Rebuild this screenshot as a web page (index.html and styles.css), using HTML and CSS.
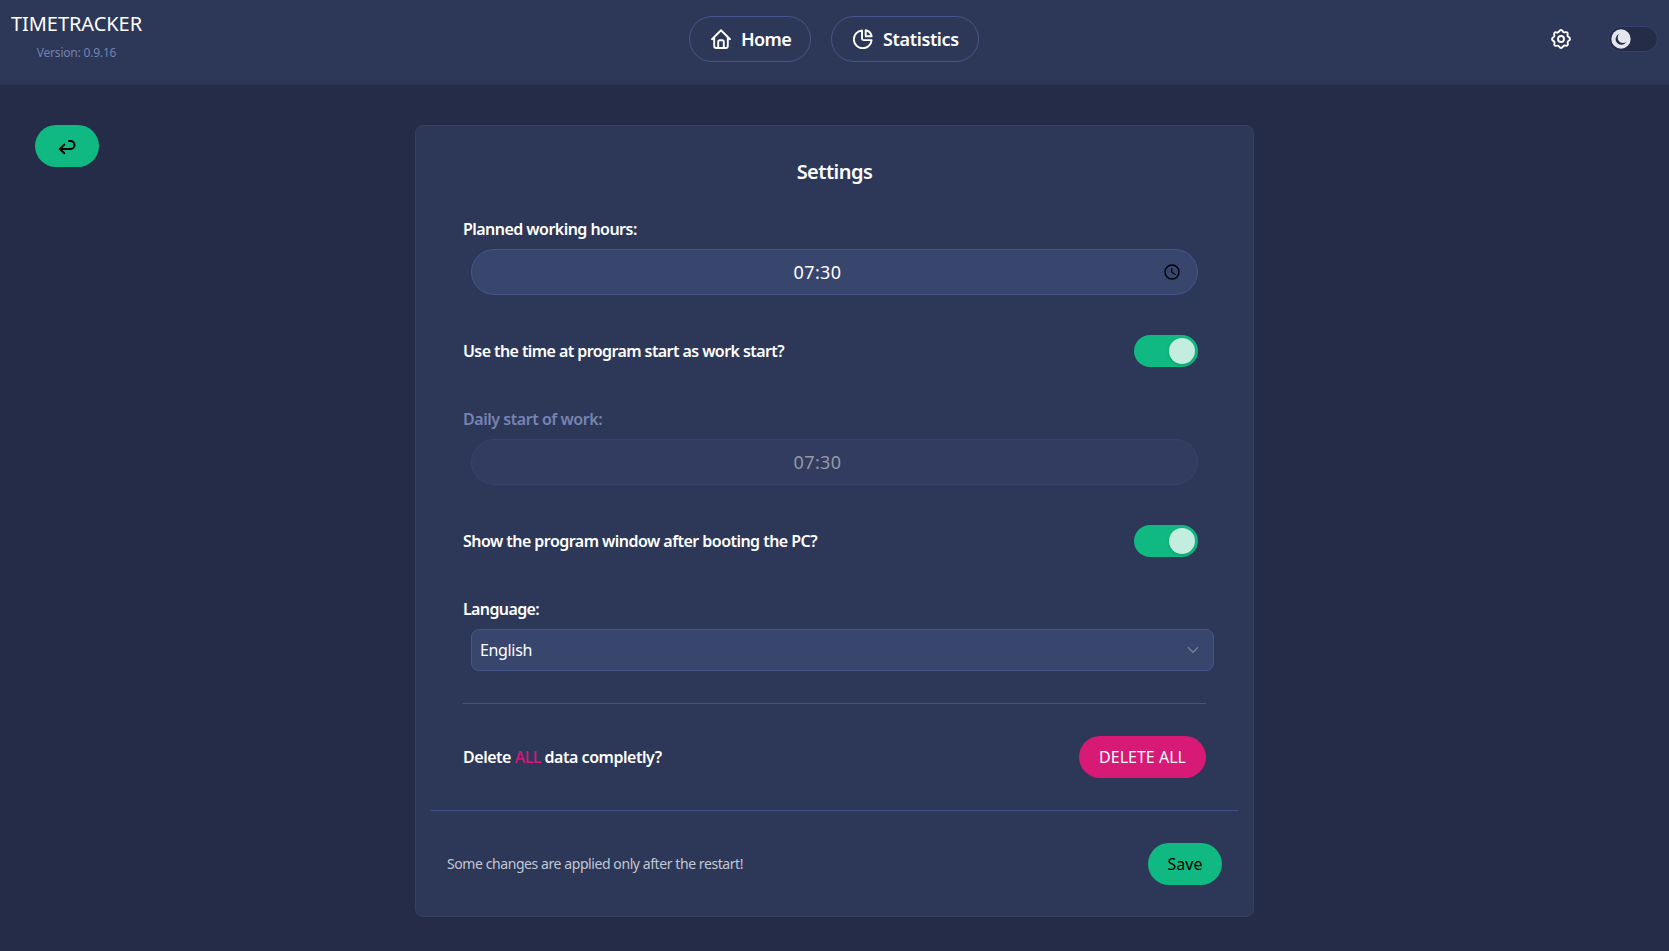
FILE: index.html
```html
<!DOCTYPE html>
<html lang="en">
<head>
<meta charset="utf-8">
<title>Timetracker</title>
<link rel="stylesheet" href="styles.css">
</head>
<body>
<header class="topbar">
  <div class="brand">
    <div class="brand-name">TIMETRACKER</div>
    <div class="brand-version">Version: 0.9.16</div>
  </div>
  <nav class="nav">
    <a class="nav-link nav-home">
      <svg class="icon" viewBox="0 0 20 20"><path d="M1 10.2 10 1.3l9 8.900M3.200 8.600V16.900Q3.200 19 5.300 19H14.700Q16.800 19 16.800 16.900V8.600M7.200 19V13Q7.200 11.300 8.900 11.300H11.100Q12.800 11.300 12.800 13V19"/></svg>
      <span>Home</span>
    </a>
    <a class="nav-link nav-stats">
      <svg class="icon" viewBox="0 0 20 20"><path d="M9 1.500A8.900 8.900 0 1 0 18.600 11.100H10.500Q9 11.100 9 9.600ZM12.700 1.200a7.600 7.600 0 0 1 6 6h-6Z"/></svg>
      <span>Statistics</span>
    </a>
  </nav>
  <div class="tools">
    <svg class="icon gear" viewBox="0 0 20 20"><circle cx="10" cy="10" r="3"/><path d="M10 1C11.800 1 11.600 3.300 13 3.400S15.300 2.400 16.400 3.600 15.900 5.700 16.600 7 19 8.200 19 10 16.700 11.600 16.600 13 17.600 15.300 16.400 16.400 14.300 15.900 13 16.600 11.800 19 10 19 8.400 16.700 7 16.600 4.700 17.600 3.600 16.400 4.100 14.300 3.400 13 1 11.800 1 10 3.300 8.400 3.400 7 2.400 4.700 3.600 3.600 5.700 4.100 7 3.400 8.200 1 10 1Z"/></svg>
    <div class="theme-switch">
      <svg class="moon" viewBox="0 0 20 20"><circle cx="10" cy="10" r="9.700" fill="#e3e6ed"/><path d="M8.500 4.700A5.700 5.700 0 1 0 15.400 12.700 5.200 5.200 0 0 1 8.500 4.700Z" fill="#252c47"/></svg>
    </div>
  </div>
</header>
<main class="page">
  <button class="btn back" aria-label="Back">
    <svg class="return" viewBox="0 0 18 16"><path d="M11 2h1.500a3.900 3.900 0 0 1 0 8H2M6.300 5.600 1.800 10l4.500 4.300"/></svg>
  </button>
  <section class="card">
    <h1 class="title"><span>Settings</span></h1>
    <div class="form">
      <div class="field">
        <div class="label l-planned">Planned working hours:</div>
        <div class="time"><span class="time-value">07:30</span>
          <svg class="clock" viewBox="0 0 16 16"><circle cx="8" cy="8" r="7"/><path class="hands" d="M7.800 4v4.300l3.800 2.300"/></svg>
        </div>
      </div>
      <div class="row"><div class="label l-use">Use the time at program start as work start?</div><div class="toggle"><i class="knob"></i></div></div>
      <div class="field">
        <div class="label muted l-daily">Daily start of work:</div>
        <div class="time disabled"><span class="time-value">07:30</span></div>
      </div>
      <div class="row"><div class="label l-show">Show the program window after booting the PC?</div><div class="toggle"><i class="knob"></i></div></div>
      <div class="field language">
        <div class="label l-lang">Language:</div>
        <div class="select"><span>English</span><svg class="chevron" viewBox="0 0 12 8"><path d="m1 1.300 5 5 5-5"/></svg></div>
      </div>
      <div class="row danger"><div class="label l-delete">Delete <span class="pink">ALL</span> data completly?</div><button class="btn delete">DELETE ALL</button></div>
    </div>
    <footer class="foot"><div class="note">Some changes are applied only after the restart!</div><button class="btn save">Save</button></footer>
  </section>
</main>
</body>
</html>
```

FILE: styles.css
```css
* { box-sizing: border-box; }
body { margin: 0; min-height: 951px; background: #252c47; color: #fff; font: 16px/24px "Noto Sans", sans-serif; overflow: hidden; }
.topbar { height: 85px; background: #2d3757; display: grid; grid-template-columns: 1fr auto 1fr; align-items: start; }
.brand { width: 153px; padding-top: 10px; text-align: center; }
.brand-name { font-size: 20px; line-height: 28px; letter-spacing: -.05px; }
.brand-version { font-size: 12px; line-height: 16px; margin-top: 7px; color: #7482b0; letter-spacing: -.2px; }
.nav { display: flex; gap: 20px; padding: 16px 1px 0 0; }
.nav-link { height: 46px; border: 1px solid #46568c; border-radius: 23px; display: flex; align-items: center; gap: 10px; padding-left: 21px; font-size: 18px; font-weight: 600; white-space: nowrap; letter-spacing: -.35px; }
.nav-home { width: 122px; letter-spacing: -.6px; }
.nav-stats { width: 148px; }
.icon { width: 20px; height: 20px; flex: none; fill: none; stroke: #fff; stroke-width: 1.9; stroke-linejoin: round; stroke-linecap: round; }
.nav-link .icon { margin-bottom: 1px; }
.tools { display: flex; justify-content: flex-end; align-items: center; gap: 37px; padding: 26px 11px 0 0; }
.theme-switch { width: 50px; height: 26px; border: 1px solid #35426d; border-radius: 13px; background: #252c47; padding: 2px; }
.moon { display: block; width: 20px; height: 20px; }
.page { position: relative; display: flex; justify-content: center; padding-top: 40px; }
.btn { border: 0; height: 42px; border-radius: 21px; font: 16px/24px "Noto Sans", sans-serif; padding: 0; white-space: nowrap; }
.back { position: absolute; left: 35px; top: 40px; width: 64px; background: #10b981; display: flex; align-items: center; justify-content: center; }
.return { width: 18px; height: 16px; margin-top: 1px; fill: none; stroke: #000; stroke-width: 2; stroke-linecap: round; stroke-linejoin: round; }
.card { width: 839px; height: 792px; border: 1px solid #363f5e; border-radius: 8px; background: #2d3757; padding: 32px 15px 0; }
.title { margin: 0; font-size: 20px; line-height: 28px; font-weight: 600; text-align: center; letter-spacing: -.5px; }
.form { padding: 31px 32px 32px; border-bottom: 1px solid #43528a; }
.label { font-weight: 600; white-space: nowrap; letter-spacing: -.54px; }
.l-use { letter-spacing: -.58px; }
.l-daily { letter-spacing: -.46px; }
.l-lang { letter-spacing: -.62px; }
.l-delete { letter-spacing: -.47px; }
.muted { color: #7684b3; }
.time { margin: 8px 8px 0; height: 46px; border: 1px solid #46568c; border-radius: 23px; background: #38456d; display: flex; align-items: center; justify-content: center; padding-right: 34px; position: relative; font-size: 18px; letter-spacing: .4px; }
.clock { position: absolute; right: 17px; top: 14px; width: 16px; height: 16px; fill: none; stroke: #000; stroke-width: 1.4; }
.hands { stroke-width: 1.1; }
.disabled { background: #313c60; border-color: #37446f; color: #9499a4; }
.row { display: flex; align-items: center; justify-content: space-between; height: 32px; margin: 40px 8px 40px 0; }
.toggle { width: 64px; height: 32px; border-radius: 16px; background: #10b981; display: flex; justify-content: flex-end; padding: 3px; }
.knob { width: 26px; height: 26px; border-radius: 50%; background: #c3eedf; box-shadow: 0 1px 3px rgba(0,0,0,.15); }
.language { padding-bottom: 32px; border-bottom: 1px solid #43528a; }
.select { margin: 8px -8px 0 8px; height: 42px; border: 1px solid #46568c; border-radius: 8px; background: #38456d; display: flex; align-items: center; justify-content: space-between; padding: 0 14px 0 8px; letter-spacing: -.35px; }
.chevron { width: 12px; height: 8px; fill: none; stroke: #777f91; stroke-width: 1.5; }
.danger { height: 42px; margin: 32px 0 0; }
.pink { color: #d61a76; font-weight: 500; }
.delete { width: 127px; background: #d61a76; color: #fff; }
.foot { display: flex; align-items: center; justify-content: space-between; padding: 32px 16px 0; }
.note { font-size: 14px; color: #c2c7d3; letter-spacing: -.42px; }
.save { width: 74px; background: #10b981; color: #000; }
```
